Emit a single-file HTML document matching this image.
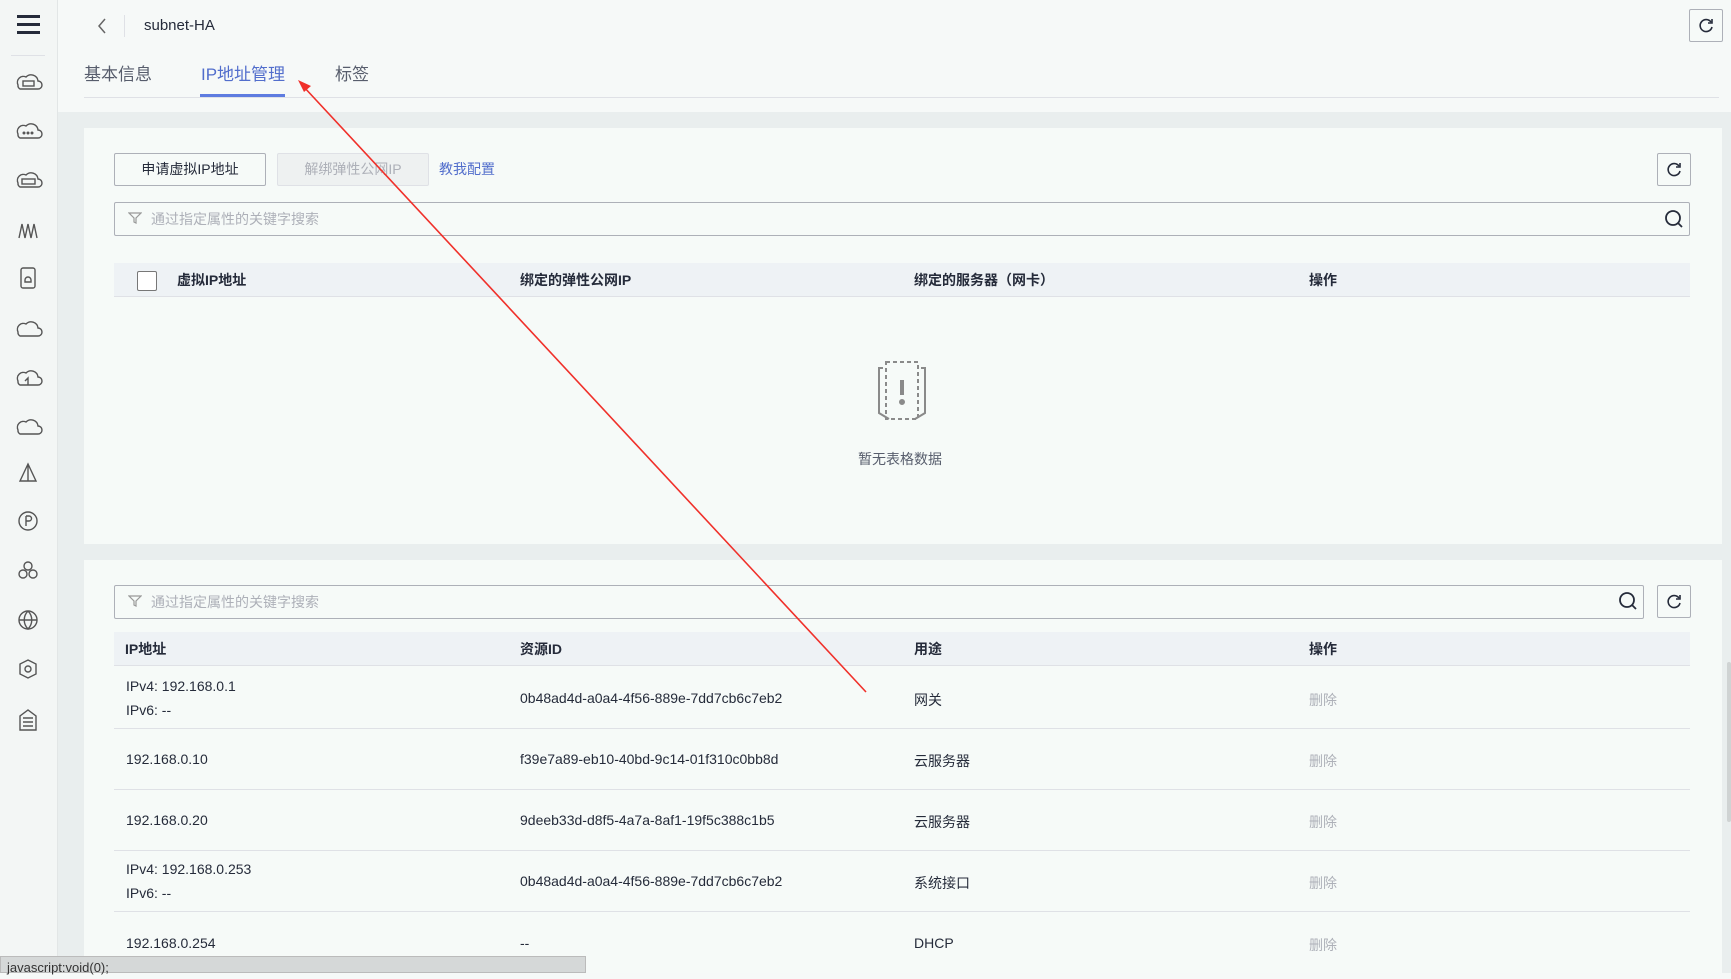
<!DOCTYPE html><html><head><meta charset="utf-8"><style>
*{margin:0;padding:0;box-sizing:border-box}
body{width:1731px;height:973px;overflow:hidden;background:#f6f9f8;font-family:"Liberation Sans","Noto Sans CJK SC",sans-serif;color:#252b3a;position:relative;font-size:14px}
.abs{position:absolute}
.side{left:0;top:0;width:58px;height:973px;background:#f3f6f5;border-right:1px solid #e2e6e6}
.band{left:58px;top:112px;width:1673px;height:861px;background:#e9eeee}
.card{background:#f6faf8;left:84px;width:1638px}
.btn{border:1px solid #adb0b8;border-radius:2px;height:33px;line-height:31px;text-align:center;font-size:14px;background:#f6faf8}
.rf{width:34px;height:33px;border:1px solid #adb0b8;border-radius:2px;background:#f6faf8}
.search{border:1px solid #adb0b8;border-radius:2px;height:34px;color:#adb0b8;font-size:14px;line-height:32px;padding-left:36px}
.th{background:#eef2f5;height:34px;border-bottom:1px solid #dfe1e6;font-weight:bold;font-size:14px;line-height:34px}
.row{height:61px;border-bottom:1px solid #dfe1e6;font-size:14px;color:#252b3a}
.row span{position:absolute}
.del{color:#adb0b8}
</style></head><body>
<div class="abs side">
<div class="abs" style="left:17px;top:15px;width:23px;height:3px;background:#252b3a;box-shadow:0 8px 0 #252b3a,0 16px 0 #252b3a"></div>
<div class="abs" style="left:11px;top:55px;width:34px;height:1px;background:#dfe1e6"></div>
<svg class="abs" style="left:0;top:0" width="58" height="740" fill="none" stroke="#555" stroke-width="1.4">
<path d="M18 85a6 6 0 0 1 8-8a7 7 0 0 1 12 4a4 4 0 0 1 0 8h-18a4 4 0 0 1-2-4z"/><rect x="23" y="81" width="11" height="5"/>
<path d="M18 134a6 6 0 0 1 8-8a7 7 0 0 1 12 4a4 4 0 0 1 0 8h-18a4 4 0 0 1-2-4z"/><circle cx="24" cy="133" r=".8"/><circle cx="28" cy="133" r=".8"/><circle cx="32" cy="133" r=".8"/>
<path d="M18 183a6 6 0 0 1 8-8a7 7 0 0 1 12 4a4 4 0 0 1 0 8h-18a4 4 0 0 1-2-4z"/><rect x="22" y="179" width="13" height="5"/>
<path d="M19 238l3-14l3 14l3-14l3 14l3-14l3 14"/>
<rect x="21" y="268" width="14" height="20" rx="2"/><path d="M25 280a3 3 0 0 1 6 0v2h-6z"/>
<path d="M18 332a6 6 0 0 1 8-8a7 7 0 0 1 12 4a4 4 0 0 1 0 8h-18a4 4 0 0 1-2-4z"/>
<path d="M18 381a6 6 0 0 1 8-8a7 7 0 0 1 12 4a4 4 0 0 1 0 8h-18a4 4 0 0 1-2-4zM28 385v-7l-3 3"/>
<path d="M18 430a6 6 0 0 1 8-8a7 7 0 0 1 12 4a4 4 0 0 1 0 8h-18a4 4 0 0 1-2-4z"/>
<path d="M28 464l-8 17h16zM28 464v17"/>
<circle cx="28" cy="521" r="9"/><path d="M26 516v10M26 516h3a2 2 0 0 1 0 5h-3"/>
<circle cx="28" cy="566" r="4"/><circle cx="23" cy="574" r="4"/><circle cx="33" cy="574" r="4"/>
<circle cx="28" cy="620" r="9"/><path d="M19 620h18M28 611c-5 5-5 13 0 18c5-5 5-13 0-18"/>
<path d="M28 660l8 4v10l-8 4l-8-4v-10z"/><circle cx="28" cy="669" r="3"/>
<path d="M20 730v-14l8-6l8 6v14zM23 718h10M23 722h10M23 726h10"/>
</svg>
</div>
<div class="abs" style="left:58px;top:444px;width:16px;height:97px;background:#eef1f1;border-radius:0 8px 8px 0"></div>
<div class="abs" style="left:63px;top:487px;width:0;height:0;border-left:5px solid #555;border-top:4px solid transparent;border-bottom:4px solid transparent"></div>

<svg class="abs" style="left:96px;top:17px" width="12" height="18" fill="none" stroke="#666" stroke-width="1.5"><path d="M9 2l-6 7l6 7"/></svg>
<div class="abs" style="left:124px;top:15px;width:1px;height:22px;background:#dfe1e6"></div>
<div class="abs" style="left:144px;top:17px;font-size:15px">subnet-HA</div>
<div class="abs rf" style="left:1689px;top:9px"></div>
<svg class="abs" style="left:1697px;top:17px" width="18" height="18" fill="none" stroke="#252b3a" stroke-width="1.6"><path d="M14 5a6 6 0 1 0 1 5"/><path d="M15 2v4h-4" /></svg>

<div class="abs" style="left:84px;top:60px;font-size:17px;color:#575d6c">基本信息</div>
<div class="abs" style="left:201px;top:60px;font-size:17px;color:#526ecc">IP地址管理</div>
<div class="abs" style="left:335px;top:60px;font-size:17px;color:#575d6c">标签</div>
<div class="abs" style="left:84px;top:97px;width:1635px;height:1px;background:#dfe1e6"></div>
<div class="abs" style="left:200px;top:94px;width:85px;height:3px;background:#5e7ce0"></div>

<div class="abs band"></div>
<div class="abs card" style="top:128px;height:416px"></div>
<div class="abs card" style="top:560px;height:413px"></div>

<div class="abs btn" style="left:114px;top:153px;width:152px">申请虚拟IP地址</div>
<div class="abs btn" style="left:277px;top:153px;width:152px;background:#eef1f1;border-color:#dfe1e6;color:#adb0b8">解绑弹性公网IP</div>
<div class="abs" style="left:439px;top:159px;color:#526ecc;font-size:14px">教我配置</div>
<div class="abs rf" style="left:1657px;top:153px"></div>
<svg class="abs" style="left:1665px;top:161px" width="18" height="18" fill="none" stroke="#252b3a" stroke-width="1.6"><path d="M14 5a6 6 0 1 0 1 5"/><path d="M15 2v4h-4"/></svg>
<div class="abs search" style="left:114px;top:202px;width:1576px">通过指定属性的关键字搜索</div>
<svg class="abs" style="left:128px;top:211px" width="14" height="14" fill="none" stroke="#999" stroke-width="1.2"><path d="M1 2h12l-5 5v5l-2-1v-4z"/></svg>
<svg class="abs" style="left:1664px;top:209px" width="20" height="20" fill="none" stroke="#252b3a" stroke-width="1.8"><circle cx="9" cy="9" r="7"/><path d="M14 14l4 4"/></svg>

<div class="abs th" style="left:114px;top:263px;width:1576px">
<div class="abs" style="left:23px;top:8px;width:20px;height:20px;border:1px solid #777;border-radius:2px;background:#fff"></div>
<span class="abs" style="left:63px">虚拟IP地址</span>
<span class="abs" style="left:406px">绑定的弹性公网IP</span>
<span class="abs" style="left:800px">绑定的服务器（网卡）</span>
<span class="abs" style="left:1195px">操作</span>
</div>
<svg class="abs" style="left:867px;top:358px" width="70" height="72" fill="none" stroke="#8a8a8a" stroke-width="2"><path d="M16 10h-4v45l10 6M54 10h4v45l-10 6" /><rect x="19" y="4" width="32" height="57" stroke-dasharray="4 3"/><path d="M35 22v15" stroke-width="4"/><circle cx="35" cy="44" r="2" fill="#8a8a8a"/></svg>
<div class="abs" style="left:858px;top:449px;font-size:14px;color:#575d6c">暂无表格数据</div>

<div class="abs search" style="left:114px;top:585px;width:1530px">通过指定属性的关键字搜索</div>
<svg class="abs" style="left:128px;top:594px" width="14" height="14" fill="none" stroke="#999" stroke-width="1.2"><path d="M1 2h12l-5 5v5l-2-1v-4z"/></svg>
<svg class="abs" style="left:1618px;top:591px" width="20" height="20" fill="none" stroke="#252b3a" stroke-width="1.8"><circle cx="9" cy="9" r="7"/><path d="M14 14l4 4"/></svg>
<div class="abs rf" style="left:1657px;top:585px"></div>
<svg class="abs" style="left:1665px;top:593px" width="18" height="18" fill="none" stroke="#252b3a" stroke-width="1.6"><path d="M14 5a6 6 0 1 0 1 5"/><path d="M15 2v4h-4"/></svg>

<div class="abs th" style="left:114px;top:632px;width:1576px">
<span class="abs" style="left:11px">IP地址</span>
<span class="abs" style="left:406px">资源ID</span>
<span class="abs" style="left:800px">用途</span>
<span class="abs" style="left:1195px">操作</span>
</div>
<div class="abs row" style="left:114px;top:668px;width:1576px"><span style="left:12px;top:6px;line-height:24px">IPv4: 192.168.0.1<br>IPv6: --</span><span style="left:406px;top:22px">0b48ad4d-a0a4-4f56-889e-7dd7cb6c7eb2</span><span style="left:800px;top:22px">网关</span><span class="del" style="left:1195px;top:22px">删除</span></div>
<div class="abs row" style="left:114px;top:729px;width:1576px"><span style="left:12px;top:22px">192.168.0.10</span><span style="left:406px;top:22px">f39e7a89-eb10-40bd-9c14-01f310c0bb8d</span><span style="left:800px;top:22px">云服务器</span><span class="del" style="left:1195px;top:22px">删除</span></div>
<div class="abs row" style="left:114px;top:790px;width:1576px"><span style="left:12px;top:22px">192.168.0.20</span><span style="left:406px;top:22px">9deeb33d-d8f5-4a7a-8af1-19f5c388c1b5</span><span style="left:800px;top:22px">云服务器</span><span class="del" style="left:1195px;top:22px">删除</span></div>
<div class="abs row" style="left:114px;top:851px;width:1576px"><span style="left:12px;top:6px;line-height:24px">IPv4: 192.168.0.253<br>IPv6: --</span><span style="left:406px;top:22px">0b48ad4d-a0a4-4f56-889e-7dd7cb6c7eb2</span><span style="left:800px;top:22px">系统接口</span><span class="del" style="left:1195px;top:22px">删除</span></div>
<div class="abs row" style="left:114px;top:912px;width:1576px;border:none"><span style="left:12px;top:23px">192.168.0.254</span><span style="left:406px;top:23px">--</span><span style="left:800px;top:23px">DHCP</span><span class="del" style="left:1195px;top:23px">删除</span></div>

<div class="abs" style="left:1727px;top:662px;width:4px;height:160px;background:#cfd3d3;border-radius:2px"></div>
<div class="abs" style="left:0;top:956px;width:586px;height:17px;background:#d5d8d8;border:1px solid #bbb;font-size:13px;color:#333;padding-left:6px;line-height:22px">javascript:void(0);</div>

<svg class="abs" style="left:0;top:0" width="1731" height="973"><line x1="866" y1="692" x2="303" y2="86" stroke="#f0302a" stroke-width="1.6"/><path d="M298 80l13 6l-7 6z" fill="#f0302a"/></svg>
</body></html>
